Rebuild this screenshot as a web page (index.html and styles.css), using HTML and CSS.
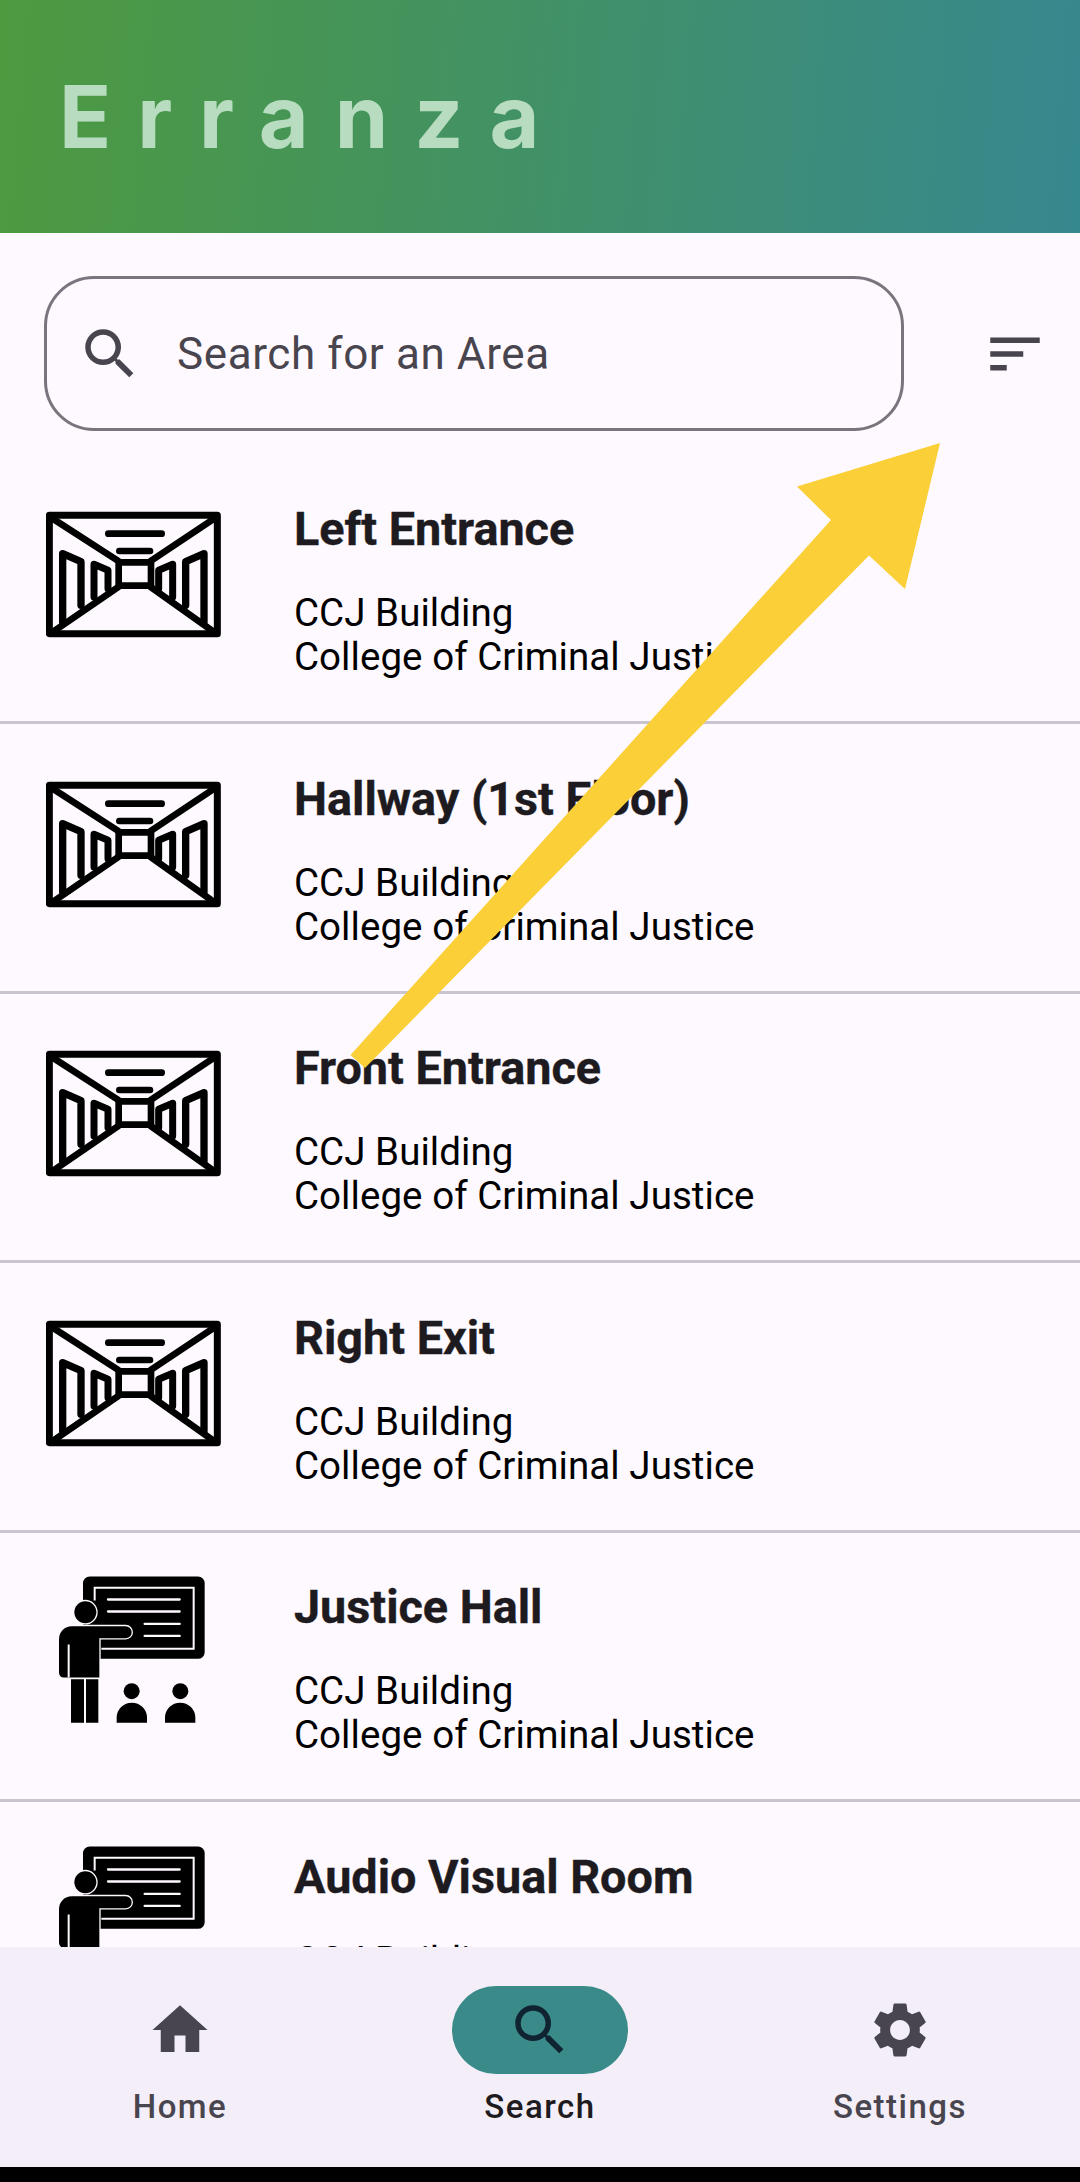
FILE: index.html
```html
<!DOCTYPE html>
<html lang="en">
<head>
  <meta charset="UTF-8" />
  <title>Erranza</title>
  <meta name="viewport" content="width=device-width, initial-scale=1.0" />
  <link rel="stylesheet" href="styles.css">
</head>
<body>

  <!-- shared list icons -->
  <svg class="defs">
    <symbol id="hallway" viewBox="78 -10 525 525">
      <g fill="none" stroke="#000" stroke-linejoin="round" stroke-linecap="round">
        <rect x="88" y="75" width="504" height="355" stroke-width="21" />
        <path stroke-width="20" d="M98 85 295 212M582 85 392 212M98 425 295 290M582 425 392 290" />
        <rect x="296" y="216" width="97" height="70" stroke-width="20" />
        <path stroke-width="20" d="M265 130H425M298 182H390" />
        <path stroke-width="22" d="M128 395V190L183 214V345M552 395V190L497 214V345" />
        <path stroke-width="21" d="M222 320V222L264 240V295M458 320V222L416 240V295" />
      </g>
    </symbol>
    <symbol id="presenter" viewBox="19 13.5 525 525">
      <rect x="130" y="48" width="365" height="247" rx="20" fill="#000" />
      <path d="M165 120V82H462V265H185" fill="none" stroke="#fef9ff" stroke-width="6" />
      <path d="M205 117H420M205 153H420M315 190H420M315 226H420" stroke="#fef9ff" stroke-width="7" stroke-linecap="round" />
      <circle cx="137" cy="155" r="33" fill="#000" stroke="#fef9ff" stroke-width="8" paint-order="stroke" />
      <path d="M96 197H258a18 18 0 0 1 0 36H179V351H72a14 14 0 0 1-14-14V235a38 38 0 0 1 38-38z" fill="#000" stroke="#fef9ff" stroke-width="8" paint-order="stroke" />
      <path d="M87 252V351" stroke="#fef9ff" stroke-width="6" />
      <path d="M94 356h39v131H94zM139 356h37v131h-37z" fill="#000" />
      <circle cx="276" cy="392" r="24" fill="#000" />
      <circle cx="422" cy="392" r="24" fill="#000" />
      <path d="M231 487V472a45 45 0 0 1 91 0V487zM376 487V472a45 45 0 0 1 91 0V487z" fill="#000" />
    </symbol>
  </svg>

  <div class="screen">
    <header class="topbar">
      <div class="logo">Erranza</div>
    </header>

    <div class="search-row">
      <div class="search-box">
        <svg class="icon" viewBox="0 0 24 24"><path d="M15.5 14h-.79l-.28-.27A6.471 6.471 0 0 0 16 9.5 6.5 6.5 0 1 0 9.5 16c1.61 0 3.09-.59 4.23-1.57l.27.28v.79l5 4.99L20.49 19l-4.99-5zm-6 0C7.01 14 5 11.99 5 9.5S7.01 5 9.5 5 14 7.01 14 9.5 11.99 14 9.5 14z" /></svg>
        <span class="placeholder">Search for an Area</span>
      </div>
      <svg class="icon" viewBox="0 0 24 24"><path d="M3 18h6v-2H3v2zM3 6v2h18V6H3zm0 7h12v-2H3v2z" /></svg>
    </div>

    <main class="area-list">
      <div class="area">
        <svg class="area-icon"><use href="#hallway" /></svg>
        <div class="area-text">
          <h2>Left Entrance</h2>
          <p>CCJ Building<br>College of Criminal Justice</p>
        </div>
      </div>
      <div class="area">
        <svg class="area-icon"><use href="#hallway" /></svg>
        <div class="area-text">
          <h2>Hallway (1st Floor)</h2>
          <p>CCJ Building<br>College of Criminal Justice</p>
        </div>
      </div>
      <div class="area">
        <svg class="area-icon"><use href="#hallway" /></svg>
        <div class="area-text">
          <h2>Front Entrance</h2>
          <p>CCJ Building<br>College of Criminal Justice</p>
        </div>
      </div>
      <div class="area">
        <svg class="area-icon"><use href="#hallway" /></svg>
        <div class="area-text">
          <h2>Right Exit</h2>
          <p>CCJ Building<br>College of Criminal Justice</p>
        </div>
      </div>
      <div class="area">
        <svg class="area-icon"><use href="#presenter" /></svg>
        <div class="area-text">
          <h2>Justice Hall</h2>
          <p>CCJ Building<br>College of Criminal Justice</p>
        </div>
      </div>
      <div class="area">
        <svg class="area-icon"><use href="#presenter" /></svg>
        <div class="area-text">
          <h2>Audio Visual Room</h2>
          <p>CCJ Building<br>College of Criminal Justice</p>
        </div>
      </div>
    </main>

    <nav class="bottom-nav">
      <div class="nav-item">
        <div class="nav-pill">
          <svg class="icon" viewBox="0 0 24 24"><path d="M10 20v-6h4v6h5v-8h3L12 3 2 12h3v8z" /></svg>
        </div>
        <span>Home</span>
      </div>
      <div class="nav-item active">
        <div class="nav-pill">
          <svg class="icon" viewBox="0 0 24 24"><path d="M15.5 14h-.79l-.28-.27A6.471 6.471 0 0 0 16 9.5 6.5 6.5 0 1 0 9.5 16c1.61 0 3.09-.59 4.23-1.57l.27.28v.79l5 4.99L20.49 19l-4.99-5zm-6 0C7.01 14 5 11.99 5 9.5S7.01 5 9.5 5 14 7.01 14 9.5 11.99 14 9.5 14z" /></svg>
        </div>
        <span>Search</span>
      </div>
      <div class="nav-item">
        <div class="nav-pill">
          <svg class="icon" viewBox="0 0 24 24"><path d="M19.14 12.94c.04-.3.06-.61.06-.94 0-.32-.02-.64-.07-.94l2.03-1.58a.49.49 0 0 0 .12-.61l-1.92-3.32a.488.488 0 0 0-.59-.22l-2.39.96c-.5-.38-1.03-.7-1.62-.94l-.36-2.54a.484.484 0 0 0-.48-.41h-3.84c-.24 0-.43.17-.47.41l-.36 2.54c-.59.24-1.13.57-1.62.94l-2.39-.96c-.22-.08-.47 0-.59.22L2.74 8.87c-.12.21-.08.47.12.61l2.03 1.58c-.05.3-.09.63-.09.94s.02.64.07.94l-2.03 1.58a.49.49 0 0 0-.12.61l1.92 3.32c.12.22.37.29.59.22l2.39-.96c.5.38 1.03.7 1.62.94l.36 2.54c.05.24.24.41.48.41h3.84c.24 0 .44-.17.47-.41l.36-2.54c.59-.24 1.13-.56 1.62-.94l2.39.96c.22.08.47 0 .59-.22l1.92-3.32c.12-.22.07-.47-.12-.61l-2.01-1.58zM12 15.6c-1.98 0-3.6-1.62-3.6-3.6s1.62-3.6 3.6-3.6 3.6 1.62 3.6 3.6-1.62 3.6-3.6 3.6z" /></svg>
        </div>
        <span>Settings</span>
      </div>
    </nav>

    <div class="system-bar"></div>

    <!-- annotation drawn on top of the screenshot -->
    <svg class="arrow" viewBox="0 0 1080 2182">
      <polygon points="940,443 797,486.5 831,520 350.5,1055 365,1068 869,555.5 905,589" />
    </svg>
  </div>

</body>
</html>
```

FILE: styles.css
```css
body {
  margin: 0;
  font-family: Roboto, "Liberation Sans", sans-serif;
  background-color: #fef9ff;
  color: #1d1b20;
}

.defs {
  display: none;
}

.screen {
  position: relative;
  display: flex;
  flex-direction: column;
  width: 1080px;
  height: 2182px;
  overflow: hidden;
}

.icon {
  display: block;
  flex: none;
  width: 66px;
  height: 66px;
  fill: #49454f;
}

/* header */
.topbar {
  flex: none;
  display: flex;
  align-items: center;
  height: 233px;
  padding-left: 59px;
  box-sizing: border-box;
  background: linear-gradient(95deg, #4d9a3f 0%, #36888f 100%);
}

.logo {
  font-family: Inter, sans-serif;
  font-size: 86px;
  font-weight: 700;
  letter-spacing: 26px;
  color: #b8dcc0;
}

/* search */
.search-row {
  flex: none;
  display: flex;
  align-items: center;
  gap: 78px;
  padding: 43px 0 23.5px 44px;
}

.search-box {
  display: flex;
  align-items: center;
  gap: 34px;
  width: 860px;
  height: 155px;
  padding-left: 30px;
  box-sizing: border-box;
  border: 3px solid #79747e;
  border-radius: 50px;
}

.placeholder {
  font-size: 44px;
  letter-spacing: 0.6px;
  color: #49454f;
}

/* list */
.area-list {
  flex: 1;
  min-height: 0;
  overflow: hidden;
}

.area {
  display: flex;
  gap: 73px;
  height: 269.5px;
  padding: 32.5px 0 0 46px;
  box-sizing: border-box;
  border-bottom: 3px solid #cac4d0;
}

.area-icon {
  flex: none;
  width: 175px;
  height: 175px;
}

.area-text h2 {
  margin: 16px 0 36px 0;
  font-size: 46.75px;
  line-height: 52px;
  font-weight: 700;
  color: #1d1b20;
  -webkit-text-stroke: 0.4px #1d1b20;
}

.area-text p {
  margin: 0;
  font-size: 38.5px;
  line-height: 44px;
  letter-spacing: 0.05px;
  color: #000;
}

/* bottom nav */
.bottom-nav {
  flex: none;
  display: flex;
  height: 220px;
  padding-top: 39px;
  box-sizing: border-box;
  background-color: #f3eef7;
}

.nav-item {
  flex: 1;
  display: flex;
  flex-direction: column;
  align-items: center;
  gap: 11px;
  font-size: 33px;
  font-weight: 500;
  letter-spacing: 1.5px;
  line-height: 44px;
  color: #49454f;
}

.nav-pill {
  display: flex;
  align-items: center;
  justify-content: center;
  width: 176px;
  height: 88px;
  border-radius: 44px;
}

.nav-item.active {
  color: #1d1b20;
}

.nav-item.active .nav-pill {
  background-color: #3b8a8a;
}

.nav-item.active .icon {
  fill: #0f2430;
}

.system-bar {
  flex: none;
  height: 15px;
  background-color: #000;
}

.arrow {
  position: absolute;
  top: 0;
  left: 0;
  width: 1080px;
  height: 2182px;
  fill: #fbcf37;
}
```
